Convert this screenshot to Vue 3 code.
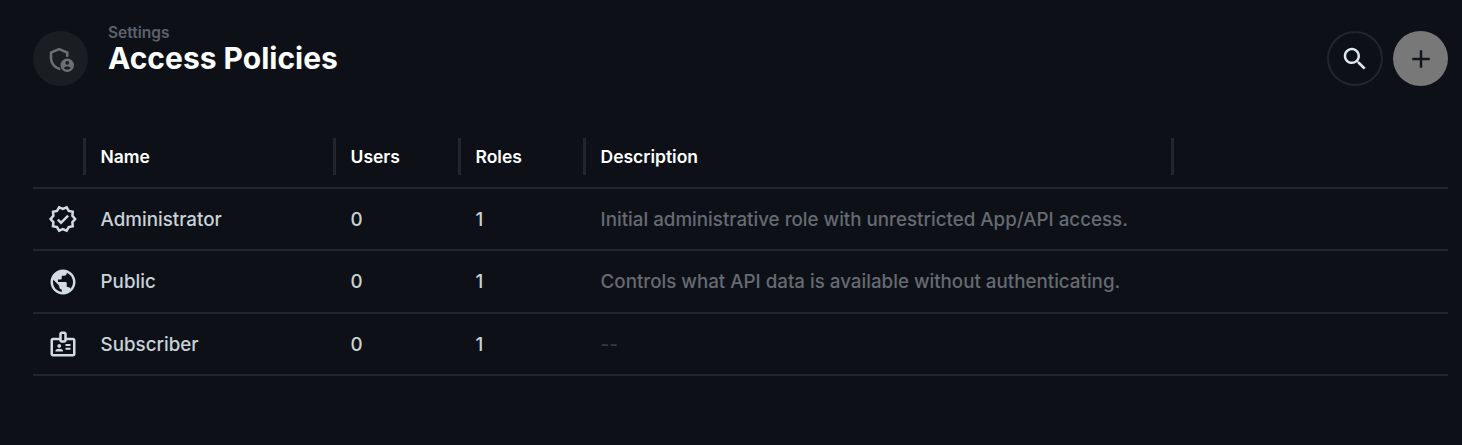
<script setup>
const rows = [
  { name: 'Administrator', users: 0, roles: 1, description: 'Initial administrative role with unrestricted App/API access.', icon: 'verified' },
  { name: 'Public', users: 0, roles: 1, description: 'Controls what API data is available without authenticating.', icon: 'public' },
  { name: 'Subscriber', users: 0, roles: 1, description: '--', icon: 'badge', empty: true }
]
</script>

<template>
  <div class="page">
    <header class="header">
      <div class="title-icon">
        <svg viewBox="0 0 24 24" width="30" height="30">
          <path class="shield" d="M17 10.2V6.9L10.5 4.1 4 6.9v4.3c0 3.9 2.7 7.5 6.5 8.7l.9-.3" />
          <path fill-rule="evenodd" d="M17 11.6a5.4 5.4 0 1 0 0 10.8 5.4 5.4 0 0 0 0-10.8zm0 1.9a1.5 1.5 0 1 1 0 3 1.5 1.5 0 0 1 0-3zm0 6.9c-1.1 0-2-.5-2.6-1.3.1-.8 1.7-1.2 2.6-1.2s2.5.4 2.6 1.2c-.6.8-1.5 1.3-2.6 1.3z" fill="currentColor" />
        </svg>
      </div>
      <div class="titles">
        <div class="crumb">Settings</div>
        <h1>Access Policies</h1>
      </div>
      <div class="actions">
        <button class="btn search" aria-label="Search">
          <svg viewBox="0 0 24 24" width="30" height="30"><path fill="currentColor" d="M15.5 14h-.79l-.28-.27C15.41 12.59 16 11.11 16 9.5 16 5.91 13.09 3 9.5 3S3 5.91 3 9.5 5.91 16 9.5 16c1.61 0 3.09-.59 4.23-1.57l.27.28v.79l5 4.99L20.49 19l-4.99-5zm-6 0C7.01 14 5 11.99 5 9.5S7.01 5 9.5 5 14 7.01 14 9.5 11.99 14 9.5 14z" /></svg>
        </button>
        <button class="btn add" aria-label="Add">
          <svg viewBox="0 0 24 24" width="30" height="30"><path fill="currentColor" d="M19 13h-6v6h-2v-6H5v-2h6V5h2v6h6v2z" /></svg>
        </button>
      </div>
    </header>

    <section class="table">
      <div class="row head">
        <div class="cell-icon"></div>
        <div class="th">Name</div>
        <div class="th">Users</div>
        <div class="th">Roles</div>
        <div class="th">Description</div>
        <div class="th end"></div>
      </div>
      <div v-for="r in rows" :key="r.name" class="row body">
        <div class="cell-icon">
          <svg v-if="r.icon === 'verified'" viewBox="0 0 24 24" width="30" height="30">
            <path fill="none" stroke="currentColor" stroke-width="2" d="M21.7 12l-2.2-2.5.3-3.3-3.2-.7-1.7-2.9-3 1.3-3-1.3-1.7 2.9-3.2.7.3 3.3L2.1 12l2.2 2.5-.3 3.3 3.2.7 1.7 2.9 3-1.3 3 1.3 1.7-2.9 3.2-.7-.3-3.3z" />
            <path fill="currentColor" d="M10.4 16.3l-3.2-3.2 1.4-1.4 1.8 1.8 5-5 1.4 1.4z" />
          </svg>
          <svg v-else-if="r.icon === 'public'" viewBox="0 0 24 24" width="30" height="30">
            <path fill="currentColor" d="M12 2C6.48 2 2 6.48 2 12s4.48 10 10 10 10-4.48 10-10S17.52 2 12 2zm-1 17.93c-3.95-.49-7-3.85-7-7.93 0-.62.08-1.21.21-1.79L9 15v1c0 1.1.9 2 2 2v1.93zm6.9-2.54c-.26-.81-1-1.39-1.9-1.39h-1v-3c0-.55-.45-1-1-1H8v-2h2c.55 0 1-.45 1-1V7h2c1.1 0 2-.9 2-2v-.41c2.93 1.19 5 4.06 5 7.41 0 2.08-.8 3.97-2.1 5.39z" />
          </svg>
          <svg v-else viewBox="0 0 24 24" width="30" height="30">
            <path fill="currentColor" d="M18 13.5h-4V12h4v1.5zM18 15h-4v1.5h4V15zM20 7h-5V4c0-1.1-.9-2-2-2h-2C9.9 2 9 2.9 9 4v3H4C2.9 7 2 7.9 2 9v11c0 1.1.9 2 2 2h16c1.1 0 2-.9 2-2V9c0-1.1-.9-2-2-2zM11 7V4h2v5h-2V7zM20 20H4V9h5c0 1.1.9 2 2 2h2c1.1 0 2-.9 2-2h5v11zM9 15c.83 0 1.5-.67 1.5-1.5S9.83 12 9 12s-1.5.67-1.5 1.5S8.17 15 9 15zM11.08 16.18C10.44 15.9 9.74 15.75 9 15.75s-1.44.15-2.08.43C6.36 16.42 6 16.96 6 17.57V18h6v-.43c0-.61-.36-1.15-.92-1.39z" />
          </svg>
        </div>
        <div class="td">{{ r.name }}</div>
        <div class="td">{{ r.users }}</div>
        <div class="td">{{ r.roles }}</div>
        <div class="td desc" :class="{ empty: r.empty }">{{ r.description }}</div>
        <div class="td"></div>
      </div>
    </section>
  </div>
</template>

<style>
html, body { margin: 0; background: #0d1117; }
</style>

<style scoped>
.page {
  height: 445px;
  box-sizing: border-box;
  padding: 0 14px 0 33px;
  background: #0d1117;
  font-family: Inter, "Liberation Sans", sans-serif;
  overflow: hidden;
}
.header {
  display: flex;
  align-items: center;
  height: 55px;
  padding-top: 31px;
}
.title-icon {
  width: 55px;
  height: 55px;
  border-radius: 50%;
  background: #1a1d21;
  color: #6b7076;
  display: flex;
  align-items: center;
  justify-content: center;
  flex: none;
}
.shield { fill: none; stroke: currentColor; stroke-width: 2; }
.titles {
  margin-left: 20px;
  margin-top: -17px;
}
.crumb {
  font-size: 15.5px;
  line-height: 17px;
  font-weight: 600;
  color: #5c616b;
}
h1 {
  margin: 0;
  font-size: 30px;
  line-height: 35px;
  font-weight: 700;
  color: #fff;
}
.actions {
  margin-left: auto;
  display: flex;
  gap: 10px;
}
.btn {
  width: 55px;
  height: 55px;
  border-radius: 50%;
  padding: 0;
  display: flex;
  align-items: center;
  justify-content: center;
  box-sizing: border-box;
}
.search {
  width: 56px;
  background: transparent;
  border: 2px solid #21262e;
  color: #dfe8f2;
}
.add {
  background: #787878;
  border: none;
  color: #12161c;
}
.table { margin-top: 40px; }
.row {
  display: grid;
  grid-template-columns: 50px 250px 125px 125px 587.5px 1fr;
  box-sizing: border-box;
  border-bottom: 2px solid #21262e;
}
.head {
  height: 63px;
  padding-top: 12px;
  align-items: start;
}
.body {
  height: 62.4px;
  align-items: center;
}
.th {
  height: 37px;
  box-sizing: border-box;
  border-left: 3px solid #21262e;
  padding-left: 14.5px;
  font-size: 17.5px;
  line-height: 38px;
  font-weight: 600;
  color: #fff;
}
.td {
  padding: 1.4px 0 0 17.6px;
  font-size: 18.75px;
  line-height: 24px;
  font-weight: 500;
  color: #c9d1d9;
  white-space: nowrap;
}
.desc { color: #666a72; }
.desc.empty { color: #343942; }
.cell-icon {
  display: flex;
  align-items: center;
  padding-left: 15px;
  color: #d3dbe3;
}
</style>
